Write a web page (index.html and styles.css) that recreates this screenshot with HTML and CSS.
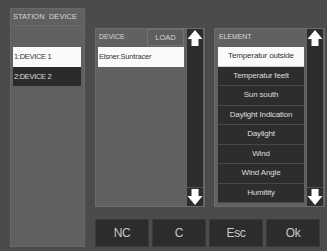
FILE: index.html
```html
<!DOCTYPE html>
<html>
<head>
<meta charset="utf-8">
<link rel="stylesheet" href="styles.css">
</head>
<body>
<div class="screen">
  <section class="station">
    <div class="station-head">STATION&nbsp; DEVICE</div>
    <div class="station-list">
      <div class="srow sel">1:DEVICE 1</div>
      <div class="srow">2:DEVICE 2</div>
    </div>
  </section>
  <div class="main">
    <div class="panels">
      <section class="panel device">
        <div class="body">
          <div class="head"><span class="label">DEVICE</span><span class="load">LOAD</span></div>
          <div class="ditem">Elsner.Suntracer</div>
        </div>
        <div class="scroll">
          <div class="sbtn up"><svg width="16" height="19" viewBox="0 0 16 19"><polygon points="8,1 15.5,10 11.5,10 11.5,17 4.5,17 4.5,10 0.5,10" fill="#fff"/></svg></div>
          <div class="track"></div>
          <div class="sbtn down"><svg width="16" height="18" viewBox="0 0 16 18"><polygon points="4.5,1 11.5,1 11.5,8 15.5,8 8,17 0.5,8 4.5,8" fill="#fff"/></svg></div>
        </div>
      </section>
      <section class="panel element">
        <div class="body">
          <div class="head"><span class="label">ELEMENT</span></div>
          <div class="elist">
            <div class="eitem sel">Temperatur outside</div>
            <div class="eitem">Temperatur feelt</div>
            <div class="eitem">Sun south</div>
            <div class="eitem">Daylight Indication</div>
            <div class="eitem">Daylight</div>
            <div class="eitem">Wind</div>
            <div class="eitem">Wind Angle</div>
            <div class="eitem">Humitity</div>
          </div>
        </div>
        <div class="scroll">
          <div class="sbtn up"><svg width="16" height="19" viewBox="0 0 16 19"><polygon points="8,1 15.5,10 11.5,10 11.5,17 4.5,17 4.5,10 0.5,10" fill="#fff"/></svg></div>
          <div class="track"></div>
          <div class="sbtn down"><svg width="16" height="18" viewBox="0 0 16 18"><polygon points="4.5,1 11.5,1 11.5,8 15.5,8 8,17 0.5,8 4.5,8" fill="#fff"/></svg></div>
        </div>
      </section>
    </div>
    <div class="actions">
      <div class="abtn">NC</div>
      <div class="abtn">C</div>
      <div class="abtn">Esc</div>
      <div class="abtn">Ok</div>
    </div>
  </div>
</div>
</body>
</html>
```
FILE: styles.css
```css
html, body {
  margin: 0;
  padding: 0;
  background: #4b4b4b;
  font-family: "Liberation Sans", Arial, sans-serif;
  width: 327px;
  height: 251px;
  overflow: hidden;
}
.screen {
  display: flex;
  gap: 10px;
  padding: 8px 0 0 10px;
}
.station {
  box-sizing: border-box;
  width: 75px;
  height: 239px;
  background: #606060;
  border: 1px solid #686868;
  display: flex;
  flex-direction: column;
}
.station-head {
  height: 16px;
  border-bottom: 1px solid #6a6a6a;
  color: #d8d8d8;
  font-size: 7.4px;
  line-height: 16px;
  padding-left: 2px;
  letter-spacing: 0.1px;
}
.station-list {
  margin-top: 21px;
  padding: 0 3px 0 2px;
}
.srow {
  height: 19.5px;
  line-height: 19.5px;
  background: #2b2b2b;
  color: #dcdcdc;
  font-size: 7.5px;
  letter-spacing: -0.3px;
  padding-left: 1px;
}
.srow.sel {
  background: #fafafa;
  color: #333;
}
.main {
  width: 230px;
  margin-top: 20px;
  display: flex;
  flex-direction: column;
}
.panels {
  display: flex;
  gap: 9px;
  height: 179px;
}
.panel {
  box-sizing: border-box;
  height: 179px;
  background: #616161;
  border: 1px solid #6c6c6c;
  display: flex;
  padding-right: 1px;
}
.device { width: 110px; }
.element { width: 111px; }
.body {
  flex: 1;
  display: flex;
  flex-direction: column;
  padding: 0 3px 0 3px;
  min-width: 0;
}
.device .body { padding-left: 2px; }
.head {
  height: 18px;
  display: flex;
  align-items: flex-start;
  justify-content: space-between;
}
.label {
  color: #d6d6d6;
  font-size: 7px;
  line-height: 10px;
  margin-top: 3px;
  padding-left: 1px;
  letter-spacing: -0.1px;
}
.load {
  box-sizing: border-box;
  width: 37px;
  height: 17px;
  margin-top: 0;
  border: 1px solid #727272;
  background: #5e5e5e;
  color: #d4d4d4;
  font-size: 7.5px;
  line-height: 15px;
  text-align: center;
}
.ditem {
  height: 20px;
  line-height: 20px;
  background: #fafafa;
  color: #333;
  font-size: 7.5px;
  letter-spacing: -0.2px;
  padding-left: 1px;
}
.elist {
  display: flex;
  flex-direction: column;
}
.eitem {
  box-sizing: border-box;
  height: 19.5px;
  line-height: 18.5px;
  background: #2d2d2d;
  border-bottom: 1px solid #484848;
  color: #dedede;
  font-size: 8px;
  text-align: center;
  letter-spacing: -0.15px;
  white-space: nowrap;
}
.eitem.sel {
  background: #fafafa;
  color: #333;
  border-bottom-color: #d0d0d0;
}
.scroll {
  width: 16px;
  display: flex;
  flex-direction: column;
  background: #2d2d2d;
}
.sbtn {
  display: flex;
}
.sbtn svg { display: block; }
.track { flex: 1; }
.sbtn.down { border-top: 1px solid #505050; }
.actions {
  display: flex;
  gap: 3px;
  margin-top: 12px;
}
.abtn {
  box-sizing: border-box;
  width: 54px;
  height: 28px;
  background: #2c2c2c;
  border: 1px solid #3a3a3a;
  color: #c8c8c8;
  font-size: 12px;
  letter-spacing: -0.4px;
  line-height: 26px;
  text-align: center;
}
```
